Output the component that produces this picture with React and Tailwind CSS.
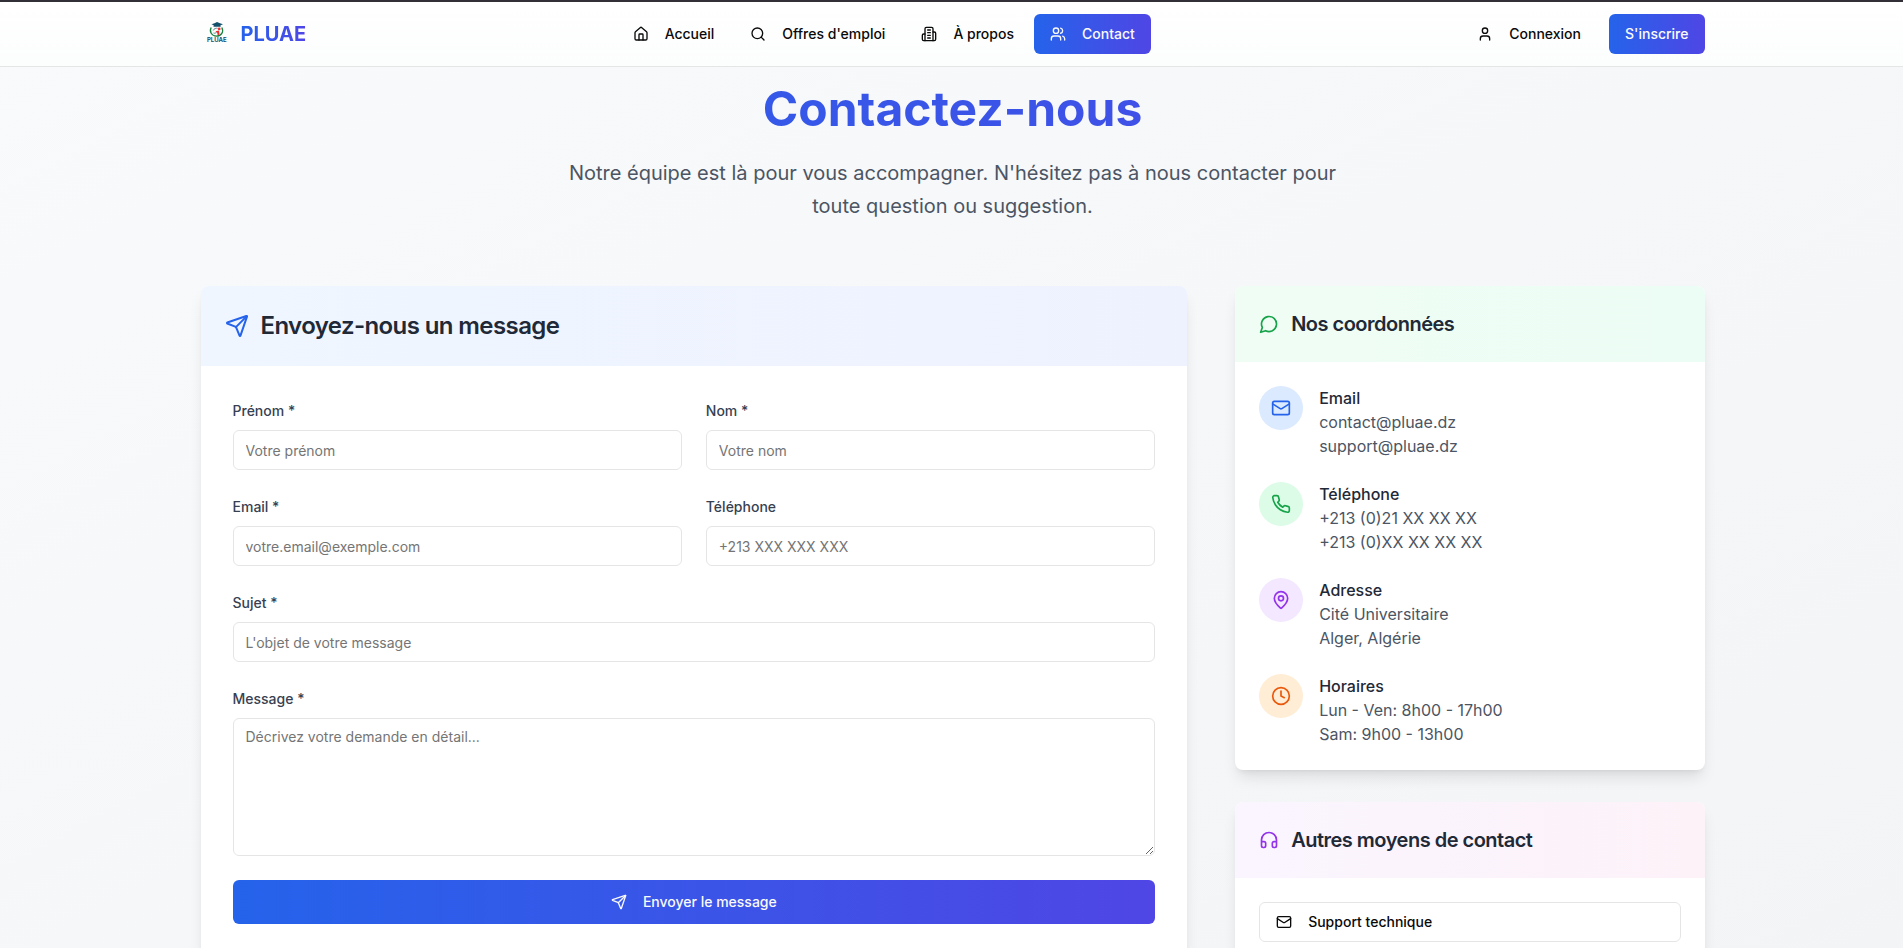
import { useId } from "react";
import {
  House, Search, Users, User, Send,
  Mail, MapPin, Clock, Headphones,
} from "lucide-react";

function LineIcon({ size, className, children }) {
  return (
    <svg
      width={size}
      height={size}
      viewBox="0 0 24 24"
      fill="none"
      stroke="currentColor"
      strokeWidth="2"
      strokeLinecap="round"
      strokeLinejoin="round"
      aria-hidden="true"
      className={className}
    >
      {children}
    </svg>
  );
}

function Building(props) {
  return (
    <LineIcon {...props}>
      <path d="M6 22V4a2 2 0 0 1 2-2h8a2 2 0 0 1 2 2v18Z" />
      <path d="M6 12H4a2 2 0 0 0-2 2v6a2 2 0 0 0 2 2h2" />
      <path d="M18 9h2a2 2 0 0 1 2 2v9a2 2 0 0 1-2 2h-2" />
      <path d="M10 6h4M10 10h4M10 14h4M10 18h4" />
    </LineIcon>
  );
}

function Bubble(props) {
  return (
    <LineIcon {...props}>
      <path d="M7.9 20A9 9 0 1 0 4 16.1L2 22Z" />
    </LineIcon>
  );
}

function Handset(props) {
  return (
    <LineIcon {...props}>
      <path d="M22 16.92v3a2 2 0 0 1-2.18 2 19.79 19.79 0 0 1-8.63-3.07 19.5 19.5 0 0 1-6-6 19.79 19.79 0 0 1-3.07-8.67A2 2 0 0 1 4.11 2h3a2 2 0 0 1 2 1.72 12.84 12.84 0 0 0 .7 2.81 2 2 0 0 1-.45 2.11L8.09 9.91a16 16 0 0 0 6 6l1.27-1.27a2 2 0 0 1 2.11-.45 12.84 12.84 0 0 0 2.81.7A2 2 0 0 1 22 16.92z" />
    </LineIcon>
  );
}

const NAV = [
  { label: "Accueil", icon: House },
  { label: "Offres d'emploi", icon: Search },
  { label: "À propos", icon: Building },
  { label: "Contact", icon: Users, active: true },
];

const DETAILS = [
  { title: "Email", lines: ["contact@pluae.dz", "support@pluae.dz"], icon: Mail, tone: "bg-[#dbeafe] text-[#2563eb]" },
  { title: "Téléphone", lines: ["+213 (0)21 XX XX XX", "+213 (0)XX XX XX XX"], icon: Handset, tone: "bg-[#dcfce7] text-[#16a34a]" },
  { title: "Adresse", lines: ["Cité Universitaire", "Alger, Algérie"], icon: MapPin, tone: "bg-[#f3e8ff] text-[#9333ea]" },
  { title: "Horaires", lines: ["Lun - Ven: 8h00 - 17h00", "Sam: 9h00 - 13h00"], icon: Clock, tone: "bg-[#ffedd5] text-[#ea580c]" },
];

const BRAND = "bg-linear-to-r/srgb from-[#2563eb] to-[#4f46e5]";
const CONTROL = "mt-2 block w-full rounded-md border border-[#e5e5e5] bg-white px-3 py-2 text-sm placeholder:text-[#757575]";
const NAV_LINK = "flex h-10 items-center gap-4 rounded-md px-4 text-sm font-medium whitespace-nowrap";

function Logo() {
  return (
    <svg viewBox="0 0 32 32" className="size-8" aria-hidden="true">
      <path d="M10.500 6.200 13.500 5.200 16 4l3 1.200 3 1-2.500 1 .2 1.500h-7.200l.2-1.500z" fill="#12506b" />
      <path d="M10.200 9.500C8 13.500 10.500 18 15.500 18.200c5 0 7.500-4.500 5.300-8.700" fill="none" stroke="#15803d" strokeWidth="1.300" />
      <path d="M12.200 12.500c.8-2 2.800-2.600 4.500-2.200M12.500 15c1.500.8 2.800-.4 3.700-1.600" fill="none" stroke="#5b8793" strokeWidth="1" />
      <circle cx="18.200" cy="10.900" r="1.300" fill="#ef2b2b" />
      <path d="M14.500 13.200l3.500-.8.500 4.200-1.800.9-.5-2.700z" fill="#ef2b2b" />
      <text x="15.800" y="24" textAnchor="middle" fontSize="6" fontWeight="700" fill="#12506b" className="font-[Inter,sans-serif]">PLUAE</text>
    </svg>
  );
}

function Field({ label, rows, ...props }) {
  const id = useId();
  return (
    <div>
      <label htmlFor={id} className="text-sm leading-none font-medium text-[#374151]">{label}</label>
      {rows ? (
        <textarea id={id} rows={rows} className={CONTROL} {...props} />
      ) : (
        <input id={id} className={`${CONTROL} h-10`} {...props} />
      )}
    </div>
  );
}

function Card({ children }) {
  return <section className="overflow-hidden rounded-lg bg-white shadow-[0_10px_15px_-3px_rgb(0_0_0/0.1),0_4px_6px_-4px_rgb(0_0_0/0.1)]">{children}</section>;
}

export default function App() {
  return (
    <div className="min-h-screen bg-linear-to-br/srgb from-[#f8fafc] to-[#f3f4f6] pb-12 font-[Inter,sans-serif] text-[#0a0a0a]">
      <header className="border-t-2 border-b border-t-[#332f36] border-b-[#e5e5e5] bg-linear-to-b/srgb from-white to-[#fcfdfd] pl-0.5">
        <div className="mx-auto flex h-16 max-w-[1536px] items-center justify-between px-4">
          <a href="#" className="flex items-center gap-2">
            <Logo />
            <span className={`${BRAND} bg-clip-text text-xl font-bold text-transparent`}>PLUAE</span>
          </a>
          <nav className="flex items-center gap-1">
            {NAV.map(({ label, icon: Icon, active }) => (
              <a key={label} href="#" className={`${NAV_LINK} ${active ? `${BRAND} text-[#fafafa]` : ""}`}>
                <Icon size={16} />
                {label}
              </a>
            ))}
          </nav>
          <div className="flex items-center gap-3">
            <a href="#" className={NAV_LINK}>
              <User size={16} />
              Connexion
            </a>
            <a href="#" className={`${NAV_LINK} ${BRAND} text-[#fafafa]`}>S'inscrire</a>
          </div>
        </div>
      </header>

      <div className="pl-0.5">
        <main className="mx-auto max-w-[1536px] px-4 pt-[18px]">
          <div className="mb-16 text-center">
            <h1 className={`${BRAND} mb-6 bg-clip-text text-5xl font-bold text-transparent`}>Contactez-nous</h1>
            <p className="mx-auto max-w-3xl text-xl leading-relaxed text-[#4b5563]">
              Notre équipe est là pour vous accompagner. N'hésitez pas à nous contacter pour toute question ou suggestion.
            </p>
          </div>

          <div className="grid grid-cols-3 items-start gap-12">
            <div className="col-span-2">
              <Card>
                <div className="bg-linear-to-r/srgb from-[#eff6ff] to-[#eef2ff] p-6">
                  <h2 className="flex items-center gap-3 text-2xl font-semibold tracking-tight text-[#1f2937]">
                    <Send size={24} className="text-[#2563eb]" />
                    Envoyez-nous un message
                  </h2>
                </div>
                <form className="flex flex-col gap-6 p-8">
                  <div className="grid grid-cols-2 gap-6">
                    <Field label="Prénom *" placeholder="Votre prénom" />
                    <Field label="Nom *" placeholder="Votre nom" />
                    <Field label="Email *" type="email" placeholder="votre.email@exemple.com" />
                    <Field label="Téléphone" type="tel" placeholder="+213 XXX XXX XXX" />
                  </div>
                  <Field label="Sujet *" placeholder="L'objet de votre message" />
                  <Field label="Message *" rows={6} placeholder="Décrivez votre demande en détail..." />
                  <button type="button" className={`${BRAND} flex h-11 items-center justify-center gap-4 rounded-md text-sm font-medium text-[#fafafa]`}>
                    <Send size={16} />
                    Envoyer le message
                  </button>
                </form>
              </Card>
            </div>

            <div className="flex flex-col gap-8">
              <Card>
                <div className="bg-linear-to-r/srgb from-[#f0fdf4] to-[#ecfdf5] p-6">
                  <h2 className="flex items-center gap-3 text-xl font-semibold tracking-tight text-[#1f2937]">
                    <Bubble size={20} className="text-[#16a34a]" />
                    Nos coordonnées
                  </h2>
                </div>
                <ul className="flex flex-col gap-6 p-6">
                  {DETAILS.map(({ title, lines, icon: Icon, tone }) => (
                    <li key={title} className="flex items-start gap-4">
                      <span className={`rounded-full p-3 ${tone}`}>
                        <Icon size={20} />
                      </span>
                      <div>
                        <h3 className="font-medium text-[#1f2937]">{title}</h3>
                        {lines.map((line) => (
                          <p key={line} className="text-[#4b5563]">{line}</p>
                        ))}
                      </div>
                    </li>
                  ))}
                </ul>
              </Card>

              <Card>
                <div className="bg-linear-to-r/srgb from-[#faf5ff] to-[#fdf2f8] p-6">
                  <h2 className="flex items-center gap-3 text-xl font-semibold tracking-tight text-[#1f2937]">
                    <Headphones size={20} className="text-[#9333ea]" />
                    Autres moyens de contact
                  </h2>
                </div>
                <div className="p-6">
                  <button type="button" className="flex h-10 w-full items-center gap-4 rounded-md border border-[#e5e5e5] bg-white px-4 text-sm font-medium">
                    <Mail size={16} />
                    Support technique
                  </button>
                </div>
              </Card>
            </div>
          </div>
        </main>
      </div>
    </div>
  );
}
